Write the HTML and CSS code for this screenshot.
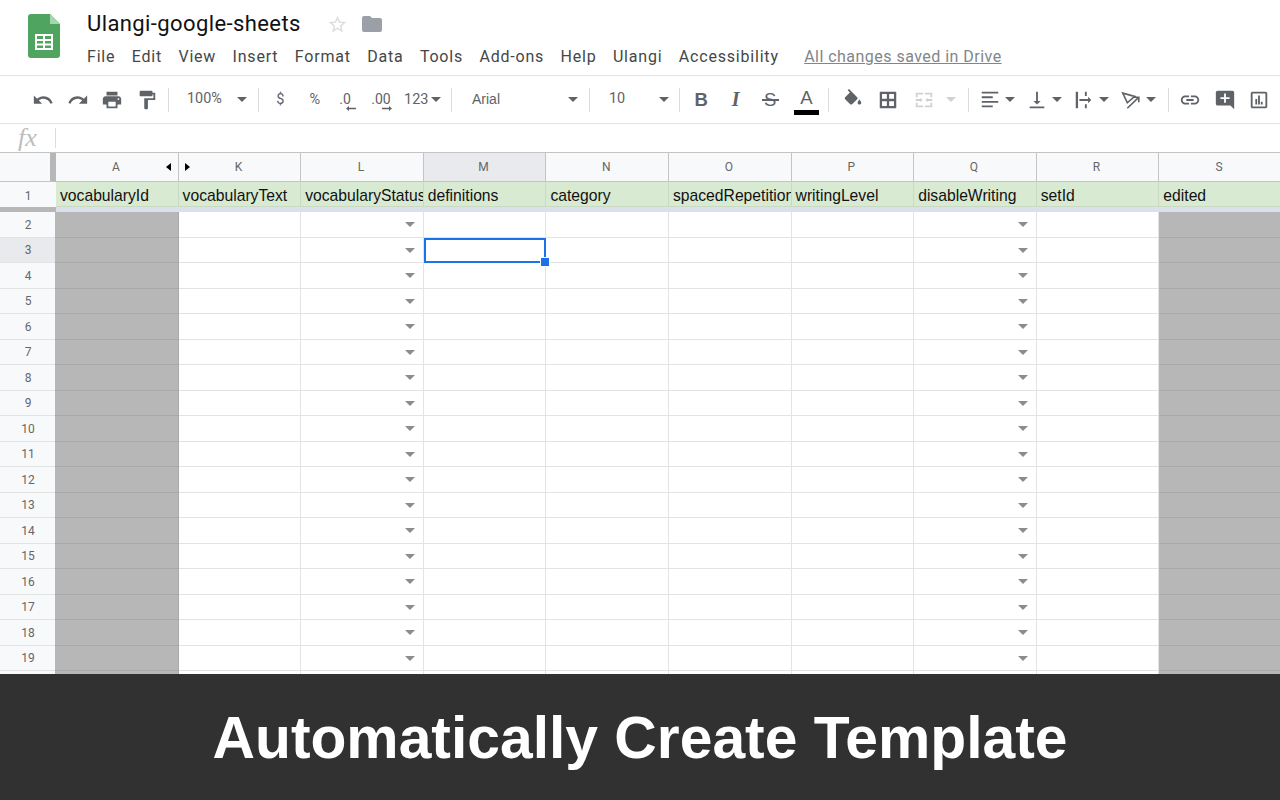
FILE: index.html
```html
<!DOCTYPE html>
<html lang="en">
<head>
<meta charset="utf-8">
<title>Ulangi-google-sheets</title>
<link rel="stylesheet" href="styles.css">
</head>
<body>
<div class="app">
<header class="head">
  <svg class="logo" viewBox="0 0 32 44"><path fill="#4fa55f" d="M3 0h19l10 10v31a3 3 0 0 1-3 3H3a3 3 0 0 1-3-3V3a3 3 0 0 1 3-3z"/><path fill="#a6d5b0" d="M22 0l10 10H22z"/><path fill="#fff" fill-rule="evenodd" d="M7 20h18v16H7zM9 22v3h6v-3zM17 22v3h6v-3zM9 27v2.500h6V27zM17 27v2.500h6V27zM9 31.500V34h6v-2.500zM17 31.500V34h6v-2.500z"/></svg>
  <div class="head-main">
    <div class="title-row">
      <span class="title">Ulangi-google-sheets</span>
      <svg class="star" viewBox="0 0 24 24"><path d="M22 9.240l-7.190-.620L12 2 9.190 8.630 2 9.240l5.460 4.730L5.820 21 12 17.270 18.180 21l-1.630-7.030L22 9.240zM12 15.400l-3.760 2.270 1-4.280-3.320-2.880 4.380-.380L12 6.100l1.710 4.040 4.380.380-3.320 2.880 1 4.280L12 15.400z"/></svg>
      <svg class="folder" viewBox="0 0 24 24"><path d="M10 4H4c-1.100 0-2 .9-2 2v12c0 1.100.9 2 2 2h16c1.100 0 2-.9 2-2V8c0-1.100-.9-2-2-2h-8l-2-2z"/></svg>
    </div>
    <nav class="menu">
      <span>File</span><span>Edit</span><span>View</span><span>Insert</span><span>Format</span><span>Data</span><span>Tools</span><span>Add-ons</span><span>Help</span><span>Ulangi</span><span>Accessibility</span>
      <a class="saved">All changes saved in Drive</a>
    </nav>
  </div>
</header>

<div class="toolbar">
  <div class="btn"><svg viewBox="0 0 24 24"><path d="M12.500 8c-2.650 0-5.050.99-6.900 2.600L2 7v9h9l-3.620-3.620c1.390-1.160 3.160-1.880 5.120-1.880 3.540 0 6.550 2.310 7.600 5.500l2.370-.78C21.080 11.030 17.150 8 12.500 8z"/></svg></div>
  <div class="btn"><svg viewBox="0 0 24 24"><path d="M18.400 10.600C16.550 8.990 14.150 8 11.500 8c-4.650 0-8.580 3.030-9.960 7.220L3.900 16c1.050-3.190 4.050-5.500 7.600-5.500 1.950 0 3.730.72 5.120 1.880L13 16h9V7l-3.600 3.600z"/></svg></div>
  <div class="btn"><svg viewBox="0 0 24 24"><path d="M19 8H5c-1.660 0-3 1.340-3 3v6h4v4h12v-4h4v-6c0-1.660-1.340-3-3-3zm-3 11H8v-5h8v5zm3-7c-.55 0-1-.45-1-1s.45-1 1-1 1 .45 1 1-.45 1-1 1zm-1-9H6v4h12V3z"/></svg></div>
  <div class="btn"><svg viewBox="0 0 24 24"><path d="M18 4V3c0-.55-.45-1-1-1H5c-.55 0-1 .45-1 1v4c0 .55.45 1 1 1h12c.55 0 1-.45 1-1V6h1v4H9v11c0 .55.45 1 1 1h2c.55 0 1-.45 1-1v-9h8V4h-3z"/></svg></div>
  <i class="sep sep-a"></i>
  <div class="select zoom"><span>100%</span><i class="caret"></i></div>
  <i class="sep"></i>
  <div class="btn txt t-dollar">$</div>
  <div class="btn txt t-pct">%</div>
  <div class="btn txt dec dec1"><span>.0</span><svg viewBox="0 0 10 5"><path d="M0 2.500L3 0v1.700h7v1.600H3V5z"/></svg></div>
  <div class="btn txt dec dec2"><span>.00</span><svg viewBox="0 0 10 5"><path d="M10 2.500L7 0v1.700H0v1.600h7V5z"/></svg></div>
  <div class="num"><span>123</span><i class="caret"></i></div>
  <i class="sep"></i>
  <div class="select font"><span>Arial</span><i class="caret"></i></div>
  <i class="sep"></i>
  <div class="select size"><span>10</span><i class="caret"></i></div>
  <i class="sep"></i>
  <div class="btn fmt bold">B</div>
  <div class="btn fmt ital">I</div>
  <div class="btn fmt strike">S</div>
  <div class="btn fmt color"><span>A</span><i></i></div>
  <i class="sep sep-b"></i>
  <div class="btn"><svg viewBox="0 0 24 24"><path d="M16.560 8.940L7.620 0 6.210 1.410l2.380 2.380-5.150 5.150c-.59.59-.59 1.540 0 2.120l5.500 5.500c.29.29.68.44 1.060.44s.77-.15 1.060-.44l5.500-5.500c.59-.58.59-1.530 0-2.120zM19 11.500s-2 2.170-2 3.500c0 1.100.9 2 2 2s2-.9 2-2c0-1.330-2-3.500-2-3.500z"/></svg></div>
  <div class="btn borders"><svg viewBox="0 0 24 24"><path fill-rule="evenodd" d="M3 3v18h18V3H3zM5.500 5.500h5.250v5.250H5.500zM13.250 5.500h5.250v5.250h-5.250zM5.500 13.250h5.250v5.250H5.500zM13.250 13.250h5.250v5.250h-5.250z"/></svg></div>
  <div class="btn merge"><svg viewBox="0 0 24 24"><path d="M3 4h8v2H5v3H3zM13 4h8v5h-2V6h-6zM3 15h2v3h6v2H3zM19 15h2v5h-8v-2h6zM3 11h5V9.500l2.500 2.500L8 14.500V13H3zM21 11h-5V9.500L13.500 12l2.500 2.500V13h5z"/></svg></div>
  <i class="caret off"></i>
  <i class="sep sep-c"></i>
  <div class="drop"><svg viewBox="0 0 24 24"><path d="M3 3h18v2H3zM3 8h12v2H3zM3 13h18v2H3zM3 18h12v2H3z"/></svg><i class="caret"></i></div>
  <div class="drop"><svg viewBox="0 0 24 24"><path d="M16 13h-3V3h-2v10H8l4 4 4-4zM4 19v2h16v-2H4z"/></svg><i class="caret"></i></div>
  <div class="drop"><svg viewBox="0 0 24 24"><path d="M3 3h2.500v18H3zM13 3h2v4.500h-2zM13 16.500h2V21h-2zM7 11h9.500V8.500L20 12l-3.500 3.500V13H7z"/></svg><i class="caret"></i></div>
  <div class="drop"><svg viewBox="0 0 24 24"><path class="rot-line" d="M3 4.500L16 8 8 15zM8 21L20 9.500M15 9h5.500v5.500"/></svg><i class="caret"></i></div>
  <i class="sep sep-d"></i>
  <div class="btn"><svg viewBox="0 0 24 24"><path d="M3.900 12c0-1.710 1.390-3.100 3.100-3.100h4V7H7c-2.760 0-5 2.240-5 5s2.240 5 5 5h4v-1.900H7c-1.710 0-3.100-1.390-3.100-3.100zM8 13h8v-2H8v2zm9-6h-4v1.900h4c1.710 0 3.100 1.390 3.100 3.100s-1.390 3.100-3.100 3.100h-4V17h4c2.760 0 5-2.240 5-5s-2.240-5-5-5z"/></svg></div>
  <div class="btn"><svg viewBox="0 0 24 24"><path fill-rule="evenodd" d="M22 4c0-1.100-.9-2-2-2H4c-1.100 0-2 .9-2 2v12c0 1.100.9 2 2 2h14l4 4V4zM17 11h-4v4h-2v-4H7V9h4V5h2v4h4v2z"/></svg></div>
  <div class="btn"><svg viewBox="0 0 24 24"><path d="M19 3H5c-1.100 0-2 .9-2 2v14c0 1.100.9 2 2 2h14c1.100 0 2-.9 2-2V5c0-1.100-.9-2-2-2zm0 16H5V5h14v14zM8 11h2v6H8zm3-4h2v10h-2zm3 7h2v3h-2z"/></svg></div>
</div>

<div class="fx-bar"><span class="fx">fx</span><i class="fx-sep"></i></div>

<main class="sheet">
  <div class="row col-head">
    <div class="corner"></div>
    <div class="ch">A<i class="tri tri-l"></i></div><div class="ch">K<i class="tri tri-r"></i></div><div class="ch">L</div><div class="ch sel">M</div><div class="ch">N</div><div class="ch">O</div><div class="ch">P</div><div class="ch">Q</div><div class="ch">R</div><div class="ch">S</div>
  </div>
  <div class="row first">
    <div class="rh">1</div>
    <div class="g">vocabularyId</div><div class="g">vocabularyText</div><div class="g">vocabularyStatus</div><div class="g">definitions</div><div class="g">category</div><div class="g">spacedRepetition</div><div class="g">writingLevel</div><div class="g">disableWriting</div><div class="g">setId</div><div class="g">edited</div>
  </div>
  <div class="freeze"><i></i></div>
  <div class="row"><div class="rh">2</div><div class="c h a"></div><div class="c"></div><div class="c d"></div><div class="c"></div><div class="c"></div><div class="c"></div><div class="c"></div><div class="c d"></div><div class="c"></div><div class="c h"></div></div>
  <div class="row"><div class="rh sel">3</div><div class="c h a"></div><div class="c"></div><div class="c d"></div><div class="c active"><i class="handle"></i></div><div class="c"></div><div class="c"></div><div class="c"></div><div class="c d"></div><div class="c"></div><div class="c h"></div></div>
  <div class="row"><div class="rh">4</div><div class="c h a"></div><div class="c"></div><div class="c d"></div><div class="c"></div><div class="c"></div><div class="c"></div><div class="c"></div><div class="c d"></div><div class="c"></div><div class="c h"></div></div>
  <div class="row"><div class="rh">5</div><div class="c h a"></div><div class="c"></div><div class="c d"></div><div class="c"></div><div class="c"></div><div class="c"></div><div class="c"></div><div class="c d"></div><div class="c"></div><div class="c h"></div></div>
  <div class="row"><div class="rh">6</div><div class="c h a"></div><div class="c"></div><div class="c d"></div><div class="c"></div><div class="c"></div><div class="c"></div><div class="c"></div><div class="c d"></div><div class="c"></div><div class="c h"></div></div>
  <div class="row"><div class="rh">7</div><div class="c h a"></div><div class="c"></div><div class="c d"></div><div class="c"></div><div class="c"></div><div class="c"></div><div class="c"></div><div class="c d"></div><div class="c"></div><div class="c h"></div></div>
  <div class="row"><div class="rh">8</div><div class="c h a"></div><div class="c"></div><div class="c d"></div><div class="c"></div><div class="c"></div><div class="c"></div><div class="c"></div><div class="c d"></div><div class="c"></div><div class="c h"></div></div>
  <div class="row"><div class="rh">9</div><div class="c h a"></div><div class="c"></div><div class="c d"></div><div class="c"></div><div class="c"></div><div class="c"></div><div class="c"></div><div class="c d"></div><div class="c"></div><div class="c h"></div></div>
  <div class="row"><div class="rh">10</div><div class="c h a"></div><div class="c"></div><div class="c d"></div><div class="c"></div><div class="c"></div><div class="c"></div><div class="c"></div><div class="c d"></div><div class="c"></div><div class="c h"></div></div>
  <div class="row"><div class="rh">11</div><div class="c h a"></div><div class="c"></div><div class="c d"></div><div class="c"></div><div class="c"></div><div class="c"></div><div class="c"></div><div class="c d"></div><div class="c"></div><div class="c h"></div></div>
  <div class="row"><div class="rh">12</div><div class="c h a"></div><div class="c"></div><div class="c d"></div><div class="c"></div><div class="c"></div><div class="c"></div><div class="c"></div><div class="c d"></div><div class="c"></div><div class="c h"></div></div>
  <div class="row"><div class="rh">13</div><div class="c h a"></div><div class="c"></div><div class="c d"></div><div class="c"></div><div class="c"></div><div class="c"></div><div class="c"></div><div class="c d"></div><div class="c"></div><div class="c h"></div></div>
  <div class="row"><div class="rh">14</div><div class="c h a"></div><div class="c"></div><div class="c d"></div><div class="c"></div><div class="c"></div><div class="c"></div><div class="c"></div><div class="c d"></div><div class="c"></div><div class="c h"></div></div>
  <div class="row"><div class="rh">15</div><div class="c h a"></div><div class="c"></div><div class="c d"></div><div class="c"></div><div class="c"></div><div class="c"></div><div class="c"></div><div class="c d"></div><div class="c"></div><div class="c h"></div></div>
  <div class="row"><div class="rh">16</div><div class="c h a"></div><div class="c"></div><div class="c d"></div><div class="c"></div><div class="c"></div><div class="c"></div><div class="c"></div><div class="c d"></div><div class="c"></div><div class="c h"></div></div>
  <div class="row"><div class="rh">17</div><div class="c h a"></div><div class="c"></div><div class="c d"></div><div class="c"></div><div class="c"></div><div class="c"></div><div class="c"></div><div class="c d"></div><div class="c"></div><div class="c h"></div></div>
  <div class="row"><div class="rh">18</div><div class="c h a"></div><div class="c"></div><div class="c d"></div><div class="c"></div><div class="c"></div><div class="c"></div><div class="c"></div><div class="c d"></div><div class="c"></div><div class="c h"></div></div>
  <div class="row"><div class="rh">19</div><div class="c h a"></div><div class="c"></div><div class="c d"></div><div class="c"></div><div class="c"></div><div class="c"></div><div class="c"></div><div class="c d"></div><div class="c"></div><div class="c h"></div></div>
  <div class="row last"><div class="rh"></div><div class="c h a"></div><div class="c"></div><div class="c"></div><div class="c"></div><div class="c"></div><div class="c"></div><div class="c"></div><div class="c"></div><div class="c"></div><div class="c h"></div></div>
</main>

<footer class="banner">Automatically Create Template</footer>
</div>
</body>
</html>
```

FILE: styles.css
```css
* { box-sizing: border-box; }
html, body { margin: 0; padding: 0; }
body { width: 1280px; height: 800px; overflow: hidden; background: #fff; font-family: Roboto, "Liberation Sans", sans-serif; }
i { display: block; font-style: normal; }

.app { display: flex; flex-direction: column; width: 1280px; height: 800px; overflow: hidden; }

/* header */
.head { display: flex; flex: none; height: 76px; border-bottom: 1px solid #e3e3e3; padding: 14px 0 0 28px; }
.logo { width: 32px; height: 44px; flex: none; }
.head-main { margin-left: 27px; display: flex; flex-direction: column; }
.title-row { display: flex; align-items: center; height: 20px; }
.title { font: 400 22px/20px Roboto, sans-serif; letter-spacing: .4px; color: #111; width: 214px; white-space: nowrap; }
.star { width: 21px; height: 21px; fill: #dadce0; margin-left: 26px; }
.folder { width: 24px; height: 24px; fill: #9aa0a6; margin-left: 12px; }
.menu { display: flex; align-items: center; margin-top: 11px; height: 22px; font-size: 16px; letter-spacing: .8px; color: #444746; white-space: nowrap; }
.menu span { margin-right: 16.400px; }
.saved { margin-left: 9px; color: #80868b; text-decoration: underline; letter-spacing: .47px; }

/* toolbar */
.toolbar { display: flex; align-items: center; flex: none; height: 48px; padding-left: 26px; border-bottom: 1px solid #e3e3e3; color: #5f6368; }
.btn { position: relative; display: flex; flex: none; align-items: center; justify-content: center; width: 34.500px; height: 30px; }
.btn svg { width: 22px; height: 22px; fill: #5f6368; }
.sep { flex: none; width: 1px; height: 24px; background: #dadce0; }
.sep-a { margin-left: 4px; }
.caret { flex: none; width: 0; height: 0; border-style: solid; border-width: 5px 5px 0; border-color: #5f6368 transparent transparent; }
.caret.off { border-top-color: #cfd1d4; margin-left: 5px; }
.select { display: flex; flex: none; align-items: center; font-size: 14.400px; color: #5f6368; }
.select span { padding-bottom: 2px; }
.zoom { width: 89px; padding-left: 18px; }
.zoom span { width: 50px; }
.font { width: 137px; padding-left: 20px; }
.font span { width: 96px; font-family: "Liberation Sans", sans-serif; font-size: 14px; padding-bottom: 1px; }
.size { width: 89px; padding-left: 19px; }
.size span { width: 50px; }
.txt { font-size: 14.500px; }
.t-dollar { margin-left: 4px; }
.btn.dec { flex-direction: column; justify-content: flex-start; font-size: 14px; line-height: 14px; width: 34px; padding-top: 7px; }
.btn.dec svg { width: 10px; height: 5px; }
.dec1 { margin-left: -4px; }
.dec1 svg { margin-left: 12px; }
.dec2 { margin-left: 2px; }
.dec2 svg { margin-left: 12px; }
.num { display: flex; flex: none; align-items: center; width: 53px; padding-left: 6px; font-size: 14.500px; }
.num span { width: 27px; }
.fmt { font-family: "Liberation Sans", sans-serif; font-size: 18.500px; }
.fmt.bold { margin-left: 4px; font-weight: 700; }
.fmt.ital { font-family: "Liberation Serif", serif; font-weight: 700; font-style: italic; font-size: 20px; }
.fmt.strike::after { content: ""; position: absolute; left: 9px; top: 14px; width: 17px; height: 2px; background: #5f6368; }
.color { flex-direction: column; width: 34px; margin-left: 2px; }
.color span { line-height: 18px; margin-top: 4px; }
.color i { width: 25px; height: 5px; background: #000; margin-top: 3px; }
.sep-b { margin-left: 4px; margin-right: 7px; }
.btn.borders { margin-left: 1px; }
.btn.merge { margin-left: 1px; }
.merge svg { fill: #cfd1d4; }
.sep-c { margin-left: 12px; }
.drop { display: flex; flex: none; align-items: center; width: 47px; padding-left: 10px; }
.drop svg { flex: none; width: 22px; height: 22px; fill: #5f6368; }
.drop .rot-line { fill: none; stroke: #5f6368; stroke-width: 1.800; }
.drop .caret { margin-left: 4px; }
.sep-d { margin-left: 11px; margin-right: 4px; }

/* formula bar */
.fx-bar { display: flex; flex: none; align-items: center; height: 29px; border-bottom: 1px solid #c4c4c4; padding-left: 18px; }
.fx { width: 37px; font: italic 400 26px/24px "Liberation Serif", serif; color: #bdbdbd; }
.fx-sep { width: 1px; height: 20px; background: #dadce0; }

/* sheet */
.sheet { position: relative; flex: 1; min-height: 0; overflow: hidden; }
.row { display: grid; grid-template-columns: 56px repeat(10, 122.600px); height: 25.500px; }
.col-head { height: 29px; }
.first { height: 25px; }
.rh { display: flex; align-items: center; justify-content: center; background: #f8f9fa; border-bottom: 1px solid #e2e3e3; font-size: 12px; color: #666; padding-top: 1px; }
.rh.sel { background: #e8eaed; }
.corner { background: #f8f9fa; border-right: 6px solid #b7b7b7; border-bottom: 1px solid #c4c4c4; }
.ch { position: relative; display: flex; align-items: center; justify-content: center; background: #f8f9fa; border-right: 1px solid #c4c4c4; border-bottom: 1px solid #c4c4c4; font-size: 12px; color: #666; padding-right: 2px; }
.ch.sel { background: #e8eaed; }
.tri { position: absolute; top: 10px; width: 0; height: 0; border-style: solid; border-color: transparent; }
.tri-l { right: 7px; border-width: 4px 5px 4px 0; border-right-color: #000; }
.tri-r { left: 6px; border-width: 4px 0 4px 5px; border-left-color: #000; }
.g { display: flex; align-items: center; background: #d9ead3; border-right: 1px solid #c9d9c4; border-bottom: 1px solid #c9d9c4; padding: 3px 0 0 4px; font: 15.700px "Liberation Sans", sans-serif; color: #111; white-space: nowrap; overflow: hidden; }
.freeze { display: flex; height: 5px; background: #dbe0ea; }
.freeze i { width: 56px; height: 5px; background: #b7b7b7; }
.first .rh { border-bottom: 0; padding-top: 2px; }
.c { position: relative; border-right: 1px solid #e2e3e3; border-bottom: 1px solid #e2e3e3; }
.h { background: #b7b7b7; border-right-color: #a9a9a9; border-bottom-color: #a9a9a9; }
.a { margin-left: -1px; }
.d::after { content: ""; position: absolute; right: 8px; top: 10px; border-style: solid; border-width: 5px 5px 0; border-color: #8c8c8c transparent transparent; }
.active { outline: 2px solid #1a73e8; outline-offset: -2px; z-index: 2; }
.handle { position: absolute; right: -4px; bottom: -4px; width: 8px; height: 8px; background: #1a73e8; box-shadow: 0 0 0 1px #fff; }

/* banner */
.banner { display: flex; flex: none; align-items: center; justify-content: center; height: 126px; background: #313131; color: #fff; font: 700 58.800px "Liberation Sans", sans-serif; }
```
